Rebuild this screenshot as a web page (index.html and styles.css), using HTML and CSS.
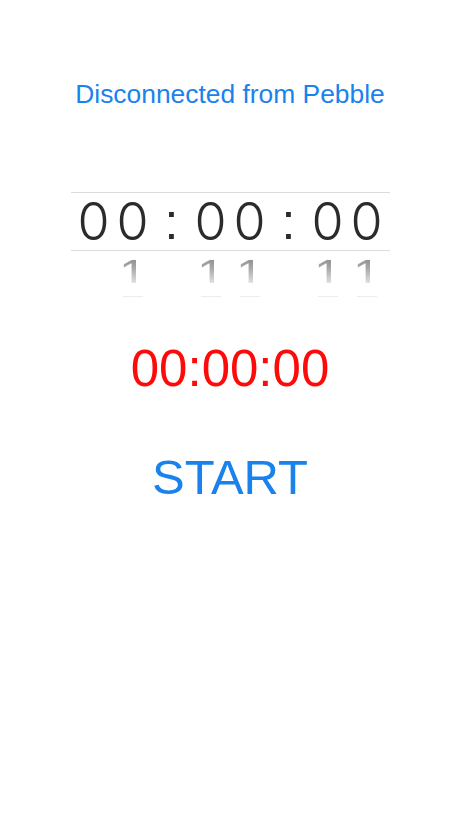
FILE: index.html
```html
<!DOCTYPE html>
<html>
<head>
<meta charset="utf-8">
<link rel="stylesheet" href="styles.css">
</head>
<body>
<div class="screen">
  <div class="status">Disconnected from Pebble</div>
  <div class="picker">
    <div class="band">
      <span class="cell">0</span><span class="cell">0</span><span class="cell colon">:</span><span class="cell">0</span><span class="cell">0</span><span class="cell colon">:</span><span class="cell">0</span><span class="cell">0</span>
    </div>
    <div class="next">
      <span class="cell"></span><span class="cell"><span class="one">1</span></span><span class="cell"></span><span class="cell"><span class="one">1</span></span><span class="cell"><span class="one">1</span></span><span class="cell"></span><span class="cell"><span class="one">1</span></span><span class="cell"><span class="one">1</span></span>
    </div>
    <div class="after">
      <span class="cell"></span><span class="cell"><span class="tick"></span></span><span class="cell"></span><span class="cell"><span class="tick"></span></span><span class="cell"><span class="tick"></span></span><span class="cell"></span><span class="cell"><span class="tick"></span></span><span class="cell"><span class="tick"></span></span>
    </div>
  </div>
  <div class="timer">00:00:00</div>
  <div class="start">START</div>
</div>
</body>
</html>
```
FILE: styles.css
```css
html, body {
  margin: 0;
  padding: 0;
  background: #ffffff;
}
.screen {
  width: 460px;
  height: 818px;
  display: flex;
  flex-direction: column;
  align-items: center;
  font-family: "Liberation Sans", Arial, sans-serif;
}
.status {
  margin-top: 79px;
  font-size: 26.4px;
  line-height: 30px;
  color: #1a82ec;
}
.picker {
  margin-top: 83px;
  width: 319px;
  display: flex;
  flex-direction: column;
  align-items: center;
}
.band {
  width: 100%;
  height: 57px;
  border-top: 1px solid #dcdcdc;
  border-bottom: 1px solid #dcdcdc;
  display: flex;
  justify-content: center;
  align-items: center;
  font-family: "Inter", sans-serif;
  font-weight: 300;
  font-size: 52px;
  color: #2b2b2b;
}
.cell {
  width: 39px;
  display: flex;
  justify-content: center;
}
.colon {
  font-family: "Liberation Sans", Arial, sans-serif;
  font-weight: 400;
  font-size: 50px;
}
.next {
  display: flex;
  justify-content: center;
  height: 40px;
  perspective: 160px;
}
.one {
  display: block;
  font-family: "Liberation Sans", Arial, sans-serif;
  font-weight: 400;
  font-size: 50px;
  line-height: 46px;
  margin-top: 5px;
  transform-origin: 50% 0;
  transform: rotateX(40deg);
  background: linear-gradient(to bottom, #8a8a8a 0%, #a8a8a8 45%, #e0e0e0 100%);
  -webkit-background-clip: text;
  background-clip: text;
  color: transparent;
}
.after {
  display: flex;
  justify-content: center;
  height: 8px;
}
.tick {
  display: block;
  width: 20px;
  height: 1px;
  margin-top: 5px;
  background: #ececec;
}
.timer {
  margin-top: 40px;
  font-size: 51px;
  line-height: 60px;
  color: #ff0a0a;
}
.start {
  margin-top: 48px;
  font-size: 49px;
  line-height: 60px;
  color: #1a82ec;
}
```
